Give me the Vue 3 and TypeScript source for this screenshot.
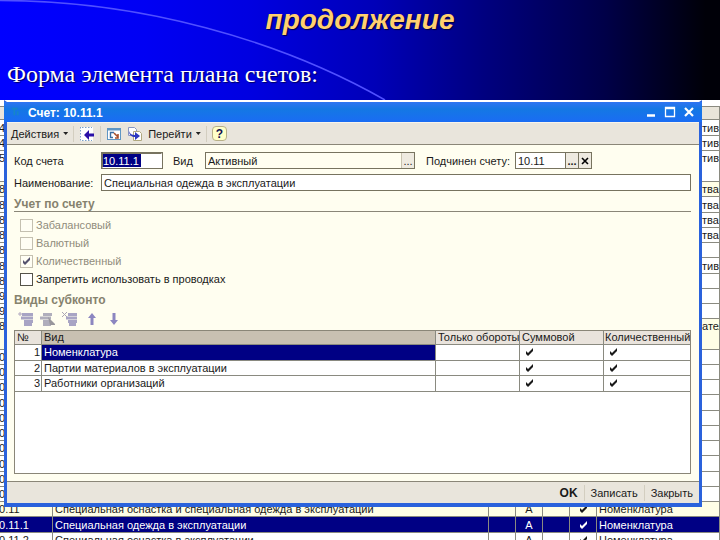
<script setup lang="ts">
import { ref } from 'vue'

interface LedgerRow {
  code: string
  name?: string
  kind?: string
  quantity?: boolean
  tail?: string
  subconto?: string
  tone?: 'group' | 'selected'
  tall?: boolean
}

interface SubcontoRow {
  id: number
  name: string
  turnover: boolean
  sum: boolean
  quantity: boolean
}

const ledger: LedgerRow[] = [
  { code: '04', tail: 'тивн' },
  { code: '04', tail: 'тивы' },
  { code: '05', tail: 'тивы', tall: true },
  { code: '08', tail: 'тва', tone: 'group' },
  { code: '08', tail: 'тва' },
  { code: '08', tail: 'тва' },
  { code: '08', tail: 'тва' },
  { code: '08' },
  { code: '08', tail: 'тивы' },
  { code: '08' },
  { code: '09' },
  { code: '09' },
  { code: '08', tail: 'ател', tone: 'group', tall: true },
  ...Array.from({ length: 10 }, () => ({ code: '10' })),
  {
    code: '10.11',
    name: 'Специальная оснастка и специальная одежда в эксплуатации',
    kind: 'А',
    quantity: true,
    subconto: 'Номенклатура',
    tone: 'group',
  },
  {
    code: '10.11.1',
    name: 'Специальная одежда в эксплуатации',
    kind: 'А',
    quantity: true,
    subconto: 'Номенклатура',
    tone: 'selected',
  },
  {
    code: '10.11.2',
    name: 'Специальная оснастка в эксплуатации',
    kind: 'А',
    quantity: true,
    subconto: 'Номенклатура',
  },
]

const subcontos: SubcontoRow[] = [
  { id: 1, name: 'Номенклатура', turnover: false, sum: true, quantity: true },
  { id: 2, name: 'Партии материалов в эксплуатации', turnover: false, sum: true, quantity: true },
  { id: 3, name: 'Работники организаций', turnover: false, sum: true, quantity: true },
]

const flags = ref([
  { id: 'offbalance', label: 'Забалансовый', checked: false, disabled: true },
  { id: 'currency', label: 'Валютный', checked: false, disabled: true },
  { id: 'quantity', label: 'Количественный', checked: true, disabled: true },
  { id: 'forbid', label: 'Запретить использовать в проводках', checked: false, disabled: false },
])

const code = ref('10.11.1')
const kind = ref('Активный')
const parent = ref('10.11')
const title = ref('Специальная одежда в эксплуатации')
const selectedId = ref(1)
</script>

<template>
  <main class="slide">
    <svg class="symbols" aria-hidden="true">
      <symbol id="tick" viewBox="0 0 9 8">
        <path d="M1 3v3l2 2 5-5V0L3 5z" fill="currentColor" />
      </symbol>
    </svg>

    <header class="heading">
      <svg class="arc" viewBox="0 0 390 100" aria-hidden="true">
        <path d="M0 0.5C140 0.5 280 40 385 100" fill="none" stroke="#5050ff" stroke-width="1.6" />
      </svg>
      <h1>продолжение</h1>
      <p>Форма элемента плана счетов:</p>
    </header>

    <section class="stage">
      <table class="ledger">
        <colgroup>
          <col class="l-code" />
          <col />
          <col class="l-flag" />
          <col class="l-flag" />
          <col class="l-flag" />
          <col class="l-flag" />
          <col class="l-sub" />
        </colgroup>
        <thead>
          <tr>
            <th v-for="n in 7" :key="n"></th>
          </tr>
        </thead>
        <tbody>
          <tr v-for="(row, i) in ledger" :key="i" :class="[row.tone, { tall: row.tall }]">
            <td class="code"><span>{{ row.code }}</span></td>
            <td>{{ row.name }}</td>
            <td></td>
            <td class="mid">{{ row.kind }}</td>
            <td></td>
            <td class="mid">
              <svg v-if="row.quantity" class="tick"><use href="#tick" /></svg>
            </td>
            <td>
              <span v-if="row.tail" class="tail">{{ row.tail }}</span>
              <template v-else>{{ row.subconto }}</template>
            </td>
          </tr>
        </tbody>
      </table>

      <form class="window" @submit.prevent>
        <div class="titlebar">
          <svg class="app" viewBox="0 0 12 12" aria-hidden="true">
            <path d="M1 2h7M4 2v8M8 5v5" fill="none" stroke="#1686c8" stroke-width="2" />
          </svg>
          <h2>Счет: 10.11.1</h2>
          <button type="button" aria-label="Свернуть">
            <svg viewBox="0 0 12 12"><path d="M2 9.5h8" stroke="#fff" stroke-width="2.5" /></svg>
          </button>
          <button type="button" aria-label="Развернуть">
            <svg viewBox="0 0 12 12">
              <path d="M1.5 1.5h9v9h-9zM1 2.5h10" fill="none" stroke="#fff" stroke-width="1.3" />
            </svg>
          </button>
          <button type="button" aria-label="Закрыть окно">
            <svg viewBox="0 0 12 12"><path d="M2 2l8 8M10 2l-8 8" stroke="#fff" stroke-width="2.2" /></svg>
          </button>
        </div>

        <div class="toolbar">
          <button type="button" class="menu">Действия<i class="caret"></i></button>
          <span class="sep"></span>
          <button type="button" aria-label="Выбрать">
            <svg viewBox="0 0 16 14">
              <rect x="1" y="0" width="13" height="14" fill="#fff" />
              <path d="M1.5 0v14M3 .5h10M3 13.5h10" stroke="#7ba0c8" stroke-dasharray="1.5 1.5" />
              <path d="M5 8l5-5v3.500h5v3h-5V13z" fill="#2a10a8" />
            </svg>
          </button>
          <span class="sep"></span>
          <button type="button" aria-label="Журнал">
            <svg viewBox="0 0 16 14">
              <rect x="1.500" y="1.500" width="13" height="11" fill="#fff" stroke="#5f96c4" />
              <path d="M1 2.500h14" stroke="#5f96c4" stroke-width="2" />
              <path d="M8 5.500H4.500v5H7" fill="none" stroke="#3b6ea0" stroke-width="1.400" />
              <path d="M8 6l4 4M12 7v4H9" fill="none" stroke="#a8502c" stroke-width="1.600" />
            </svg>
          </button>
          <button type="button" aria-label="Копировать">
            <svg viewBox="0 0 16 14">
              <path d="M1.500.5h6l2 2v6h-8z" fill="#fff" stroke="#8896c0" />
              <path d="M6.500 4.500h6l2 2v7h-8z" fill="#fff" stroke="#b0a880" />
              <path d="M2 4c1 3 3 4 6 4V5l5 4-5 4v-3C5 10 2 8 2 4z" fill="#2c38c0" />
            </svg>
          </button>
          <button type="button" class="menu">Перейти<i class="caret"></i></button>
          <span class="sep"></span>
          <button type="button" class="help" aria-label="Справка">?</button>
        </div>

        <div class="body">
          <div class="line">
            <label for="code" class="lead">Код счета</label>
            <input id="code" v-model="code" class="field code-field picked" />
            <label for="kind" class="kind-label">Вид</label>
            <span class="combo kind-combo">
              <input id="kind" v-model="kind" readonly />
              <button type="button" class="dim" aria-label="Выбрать вид">...</button>
            </span>
            <label for="parent" class="parent-label">Подчинен счету:</label>
            <span class="combo parent-combo">
              <input id="parent" v-model="parent" />
              <button type="button" aria-label="Выбрать счет">...</button>
              <button type="button" aria-label="Очистить">
                <svg viewBox="0 0 8 8"><path d="M1 1l6 6M7 1L1 7" stroke="#000" stroke-width="1.600" /></svg>
              </button>
            </span>
          </div>
          <div class="line">
            <label for="title" class="lead">Наименование:</label>
            <input id="title" v-model="title" class="field wide" />
          </div>

          <h3 class="ruled">Учет по счету</h3>
          <ul class="flags">
            <li v-for="flag in flags" :key="flag.id" :class="{ off: flag.disabled }">
              <span class="box">
                <input :id="flag.id" v-model="flag.checked" type="checkbox" :disabled="flag.disabled" />
                <svg v-if="flag.checked" class="tick"><use href="#tick" /></svg>
              </span>
              <label :for="flag.id">{{ flag.label }}</label>
            </li>
          </ul>

          <h3>Виды субконто</h3>
          <div class="tools">
            <button type="button" disabled aria-label="Добавить">
              <svg viewBox="0 0 16 14">
                <path d="M0 2h4M2 0v4" stroke="#b0a8c0" />
                <path d="M4 2.500h11M3 6h12M6 9.500h9M6 12.500h8" stroke="#a8a4c4" stroke-width="2.800" />
              </svg>
            </button>
            <button type="button" disabled aria-label="Изменить">
              <svg viewBox="0 0 16 14">
                <path d="M3 2.500h9M0 6h11M3 9.500h7M3 12.500h8" stroke="#b0aebc" stroke-width="2.800" />
                <path d="M8 5l7 7v1h-5z" fill="#98969c" />
              </svg>
            </button>
            <button type="button" disabled aria-label="Удалить">
              <svg viewBox="0 0 16 14">
                <path d="M0 0l5 5M5 0L0 5" stroke="#aaa6b4" />
                <path d="M6 2.500h9M4 6h11M6 9.500h9M7 12.500h7" stroke="#a8a4c4" stroke-width="2.800" />
              </svg>
            </button>
            <button type="button" disabled aria-label="Вверх">
              <svg viewBox="0 0 16 14"><path d="M8 1l4 5H9.500v7h-3V6H4z" fill="#8c86c0" /></svg>
            </button>
            <button type="button" disabled aria-label="Вниз">
              <svg viewBox="0 0 16 14"><path d="M8 13l4-5H9.500V1h-3v7H4z" fill="#8c86c0" /></svg>
            </button>
          </div>

          <div class="grid">
            <table>
              <colgroup>
                <col class="g-num" />
                <col />
                <col class="g-flag" />
                <col class="g-flag" />
                <col class="g-last" />
              </colgroup>
              <thead>
                <tr>
                  <th>№</th>
                  <th class="current">Вид</th>
                  <th>Только обороты</th>
                  <th>Суммовой</th>
                  <th>Количественный</th>
                </tr>
              </thead>
              <tbody>
                <tr v-for="row in subcontos" :key="row.id" @click="selectedId = row.id">
                  <td class="num">{{ row.id }}</td>
                  <td :class="{ active: row.id === selectedId }">{{ row.name }}</td>
                  <td class="mark"><svg v-if="row.turnover" class="tick"><use href="#tick" /></svg></td>
                  <td class="mark"><svg v-if="row.sum" class="tick"><use href="#tick" /></svg></td>
                  <td class="mark"><svg v-if="row.quantity" class="tick"><use href="#tick" /></svg></td>
                </tr>
              </tbody>
            </table>
          </div>
        </div>

        <footer class="actions">
          <button type="submit" class="ok">OK</button>
          <span class="sep"></span>
          <button type="button">Записать</button>
          <span class="sep"></span>
          <button type="button">Закрыть</button>
        </footer>
      </form>
    </section>
  </main>
</template>

<style>
body {
  margin: 0;
  background: #fff;
}
</style>

<style scoped>
.slide {
  height: 100vh;
  overflow: hidden;
  display: flex;
  flex-direction: column;
  font: 11px/14px "Liberation Sans", Arial, sans-serif;
  color: #1a1a1a;
}
.slide * {
  box-sizing: border-box;
}
.symbols {
  position: absolute;
  width: 0;
  height: 0;
}
button {
  display: flex;
  align-items: center;
  justify-content: center;
  padding: 0;
  border: 0;
  background: none;
  font: inherit;
  color: inherit;
}
input {
  min-width: 0;
  margin: 0;
  padding: 0 2px;
  border: 0;
  outline: 0;
  background: none;
  font: inherit;
  color: inherit;
}
h1,
h2,
h3,
p,
ul {
  margin: 0;
  padding: 0;
}

.heading {
  position: relative;
  flex: none;
  height: 100px;
  background: linear-gradient(90deg, #0000ff 0%, #0000f4 20%, #0000e0 35%, #0000b8 52%, #000080 67%, #000048 84%, #000008 98%);
}
.arc {
  position: absolute;
  top: 0;
  left: 0;
  width: 390px;
  height: 100px;
}
.heading h1 {
  position: relative;
  padding-top: 4px;
  text-align: center;
  font-size: 28px;
  line-height: 32px;
  font-style: italic;
  color: #ffd070;
  text-shadow: 1px 1px 1px #000040;
}
.heading p {
  position: relative;
  padding: 24px 7px 0;
  font: 24px/28px "Liberation Serif", "Times New Roman", serif;
  color: #fff;
  text-shadow: 1px 1px 1px #000060;
}

.stage {
  position: relative;
  flex: 1;
  min-height: 0;
  padding-top: 6px;
}

table {
  width: 100%;
  table-layout: fixed;
  border-collapse: separate;
  border-spacing: 0;
}
th,
td {
  padding: 0;
  font-weight: normal;
  text-align: left;
  white-space: nowrap;
  overflow: hidden;
}
.ledger td,
.ledger th {
  height: 15px;
  padding-left: 2px;
  border-right: 1px solid #8a8a80;
  border-bottom: 1px solid #8a8a80;
  line-height: 14px;
}
.ledger th {
  height: 14px;
  background: #e9e5da;
  border-top: 1px solid #8a8a80;
}
.ledger tbody tr:nth-child(4n + 1) td {
  height: 16px;
}
.ledger tbody tr.tall:nth-child(n) td {
  height: 31px;
  vertical-align: top;
}
.ledger .group td {
  background: #fffee6;
}
.ledger .selected td {
  background: #000084;
  color: #fff;
}
.ledger .mid {
  text-align: center;
  padding: 0;
}
.ledger .code span {
  margin-left: -9px;
}
.tail {
  padding-left: 103px;
}
.l-code {
  width: 53px;
}
.l-flag {
  width: 27px;
}
.l-sub {
  width: 123px;
}
.tick {
  display: inline-block;
  width: 9px;
  height: 8px;
}

.window {
  position: absolute;
  top: 0;
  left: 4px;
  right: 18px;
  border: 3px solid #2a62dc;
  border-top: 2px solid #fff;
  border-bottom-width: 4px;
  background: #fffef0;
}
.titlebar {
  display: flex;
  align-items: center;
  gap: 7px;
  height: 20px;
  margin: 0 -3px;
  padding: 0 7px;
  background: linear-gradient(#2f74f2, #1478e4 35%, #1a6cf4);
  color: #fff;
}
.titlebar h2 {
  flex: 1;
  padding-top: 2px;
  font-size: 12px;
  line-height: 14px;
}
.titlebar svg {
  width: 12px;
  height: 12px;
}
.titlebar .app {
  width: 10px;
}
.toolbar {
  display: flex;
  align-items: center;
  gap: 5px;
  height: 23px;
  padding: 0 4px;
  background: #e9e5dc;
  border-top: 1px solid #f8f4ec;
  border-bottom: 1px solid #8a8678;
}
.toolbar svg {
  width: 16px;
  height: 14px;
}
.caret {
  width: 5px;
  height: 3px;
  margin-left: 4px;
  background: #222;
  clip-path: polygon(0 0, 100% 0, 50% 100%);
}
.sep {
  width: 1px;
  height: 16px;
  background: #d3cec0;
}
.help {
  width: 15px;
  height: 15px;
  border: 1px solid #b8b088;
  border-radius: 4px;
  background: #ffffc8;
  font-weight: bold;
  font-size: 12px;
  color: #101050;
}

.body {
  padding: 7px 8px 7px 7px;
}
.line {
  display: flex;
  align-items: center;
  height: 17px;
  margin-bottom: 5px;
}
.lead {
  width: 87px;
}
.field,
.combo {
  height: 17px;
  border: 1px solid #77735f;
  background: #fff;
}
.code-field {
  width: 62px;
}
.picked {
  padding: 0;
  border-width: 2px;
  border-color: #77735f #fff #fff #77735f;
  outline: 1px solid #77735f;
  outline-offset: -1px;
  background: linear-gradient(90deg, #000084 38px, #fff 38px);
  color: #fff;
}
.wide {
  flex: 1;
}
.kind-label {
  width: 42px;
  padding-left: 10px;
}
.combo {
  display: flex;
}
.combo input {
  flex: 1;
}
.combo button {
  width: 13px;
  border-left: 1px solid #77735f;
  background: #eeeae0;
  font-weight: bold;
}
.combo button svg {
  width: 8px;
  height: 8px;
}
.combo .dim {
  border-color: #c8c2b0;
  font-weight: normal;
}
.kind-combo {
  width: 210px;
  background: #fffef0;
}
.parent-label {
  width: 100px;
  padding-left: 11px;
}
.parent-combo {
  width: 77px;
}

h3 {
  font-size: 12px;
  line-height: 14px;
  color: #86826e;
}
.ruled {
  margin-top: 6px;
  border-bottom: 1px solid #8a8678;
}
.flags {
  padding: 4px 0 0 6px;
  list-style: none;
}
.flags li {
  display: flex;
  align-items: center;
  gap: 3px;
  height: 18px;
}
.off {
  color: #908c7c;
}
.box {
  position: relative;
  display: flex;
  width: 13px;
  height: 13px;
}
.box input {
  appearance: none;
  width: 13px;
  height: 13px;
  padding: 0;
  border: 1px solid #55534a;
  background: #fff;
}
.off .box input {
  border-color: #c4c0b0;
  background: #fffef4;
}
.box .tick {
  position: absolute;
  top: 2px;
  left: 2px;
  color: #54526e;
  pointer-events: none;
}
.flags + h3 {
  margin-top: 5px;
}
.tools {
  display: flex;
  gap: 6px;
  padding: 5px 0 4px 4px;
}
.tools svg {
  width: 16px;
  height: 14px;
}

.grid {
  min-height: 144px;
  border: 1px solid #8a8678;
  background: #fff;
}
.grid th,
.grid td {
  height: 15px;
  padding-left: 2px;
  border-right: 1px solid #8a8a80;
  border-bottom: 1px solid #8a8a80;
  line-height: 13px;
}
.grid tr > :last-child {
  border-right: 0;
}
.grid th {
  height: 14px;
  background: #e9e3dc;
}
.grid th:last-child {
  padding-left: 1px;
}
.grid .current {
  background: #c8c0b2;
}
.grid tbody tr:nth-child(odd) td {
  height: 16px;
}
.grid .num {
  padding-right: 1px;
  text-align: right;
}
.grid .active {
  background: #000084;
  color: #fff;
}
.grid .mark {
  padding-left: 5px;
}
.g-num {
  width: 27px;
}
.g-flag {
  width: 84px;
}
.g-last {
  width: 86px;
}

.actions {
  display: flex;
  align-items: center;
  justify-content: flex-end;
  gap: 6px;
  height: 22px;
  padding-right: 6px;
  background: #e9e5dc;
  border-top: 1px solid #8a8678;
}
.ok {
  font-size: 12px;
  font-weight: bold;
}
</style>
